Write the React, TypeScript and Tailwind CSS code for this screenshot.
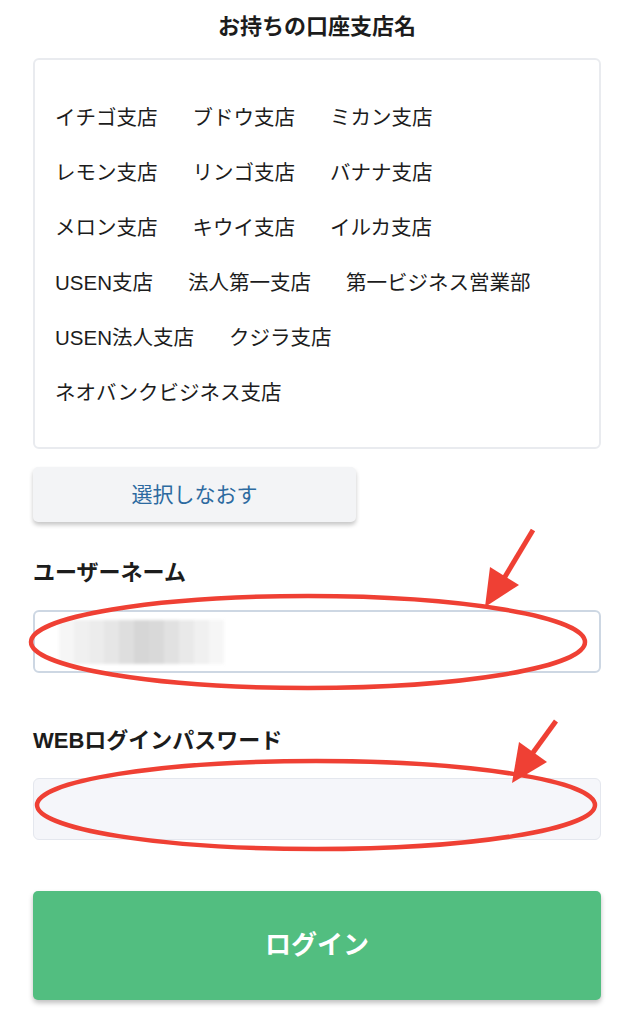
import React from "react";

const branches = [
  "イチゴ支店",
  "ブドウ支店",
  "ミカン支店",
  "レモン支店",
  "リンゴ支店",
  "バナナ支店",
  "メロン支店",
  "キウイ支店",
  "イルカ支店",
  "USEN支店",
  "法人第一支店",
  "第一ビジネス営業部",
  "USEN法人支店",
  "クジラ支店",
  "ネオバンクビジネス支店",
];

// rows are fixed in the original layout
const rows = [
  [0, 1, 2],
  [3, 4, 5],
  [6, 7, 8],
  [9, 10, 11],
  [12, 13],
  [14],
];

const blurShades = ["#f6f6f6", "#f0f0f0", "#ececec", "#e6e6e6", "#dedede", "#d6d6d6", "#d9d9d9", "#e1e1e1", "#e9e9e9", "#f0f0f0", "#f6f6f6"];

function Annotations() {
  return (
    <svg className="pointer-events-none absolute inset-0" width="634" height="1024" viewBox="0 0 634 1024">
      <ellipse cx="308" cy="642" rx="277" ry="46" fill="none" stroke="#ef4034" strokeWidth="4.5" />
      <line x1="533" y1="530" x2="503" y2="580" stroke="#ef4034" strokeWidth="5" />
      <polygon points="485,607 490,567 519,585" fill="#ef4034" />
      <ellipse cx="316" cy="805" rx="279" ry="44" fill="none" stroke="#ef4034" strokeWidth="4.5" />
      <line x1="556" y1="721" x2="532" y2="754" stroke="#ef4034" strokeWidth="5" />
      <polygon points="512,783 519,742 547,762" fill="#ef4034" />
    </svg>
  );
}

export default function App() {
  return (
    <div
      className="relative h-[1024px] w-full overflow-hidden bg-white px-[33px] text-[#1c1c1c]"
      style={{ fontFamily: '"Liberation Sans", "Noto Sans CJK JP", sans-serif' }}
    >
      <h2 className="pt-[11px] text-center text-[22px] font-bold leading-[32px]">お持ちの口座支店名</h2>

      <div className="mt-[15px] h-[391px] rounded-[6px] border-2 border-[#e9ebef] px-[20px] pt-[31px] pb-[27px]">
        {rows.map((row, i) => (
          <div key={i} className="flex h-[55px] items-center gap-x-[35px]">
            {row.map((idx) => (
              <span key={idx} className="text-[20.5px] leading-none">
                {branches[idx]}
              </span>
            ))}
          </div>
        ))}
      </div>

      <button className="mt-[18px] flex h-[55px] w-[323px] items-center justify-center rounded-[5px] bg-[#f3f4f6] text-[21px] text-[#2c6aa0] shadow-[0_3px_4px_rgba(0,0,0,0.22)]">
        選択しなおす
      </button>

      <label className="mt-[35px] block text-[22px] font-bold leading-[32px]">ユーザーネーム</label>
      <div className="mt-[21px] flex h-[63px] items-center rounded-[6px] border-2 border-[#cdd7e3] bg-white pl-[24px]">
        <div className="flex h-[44px] blur-[1.5px]">
          {blurShades.map((c, i) => (
            <div key={i} className="h-full w-[15px]" style={{ backgroundColor: c }} />
          ))}
        </div>
      </div>

      <label className="mt-[52px] block text-[22px] font-bold leading-[32px]">WEBログインパスワード</label>
      <div className="mt-[21px] h-[62px] rounded-[6px] border border-[#e4e7ee] bg-[#f5f6fa]" />

      <button className="mt-[51px] flex h-[109px] w-full items-center justify-center rounded-[5px] bg-[#52be80] text-[26px] font-bold text-white shadow-[0_3px_5px_rgba(0,0,0,0.25)]">
        ログイン
      </button>

      <Annotations />
    </div>
  );
}
